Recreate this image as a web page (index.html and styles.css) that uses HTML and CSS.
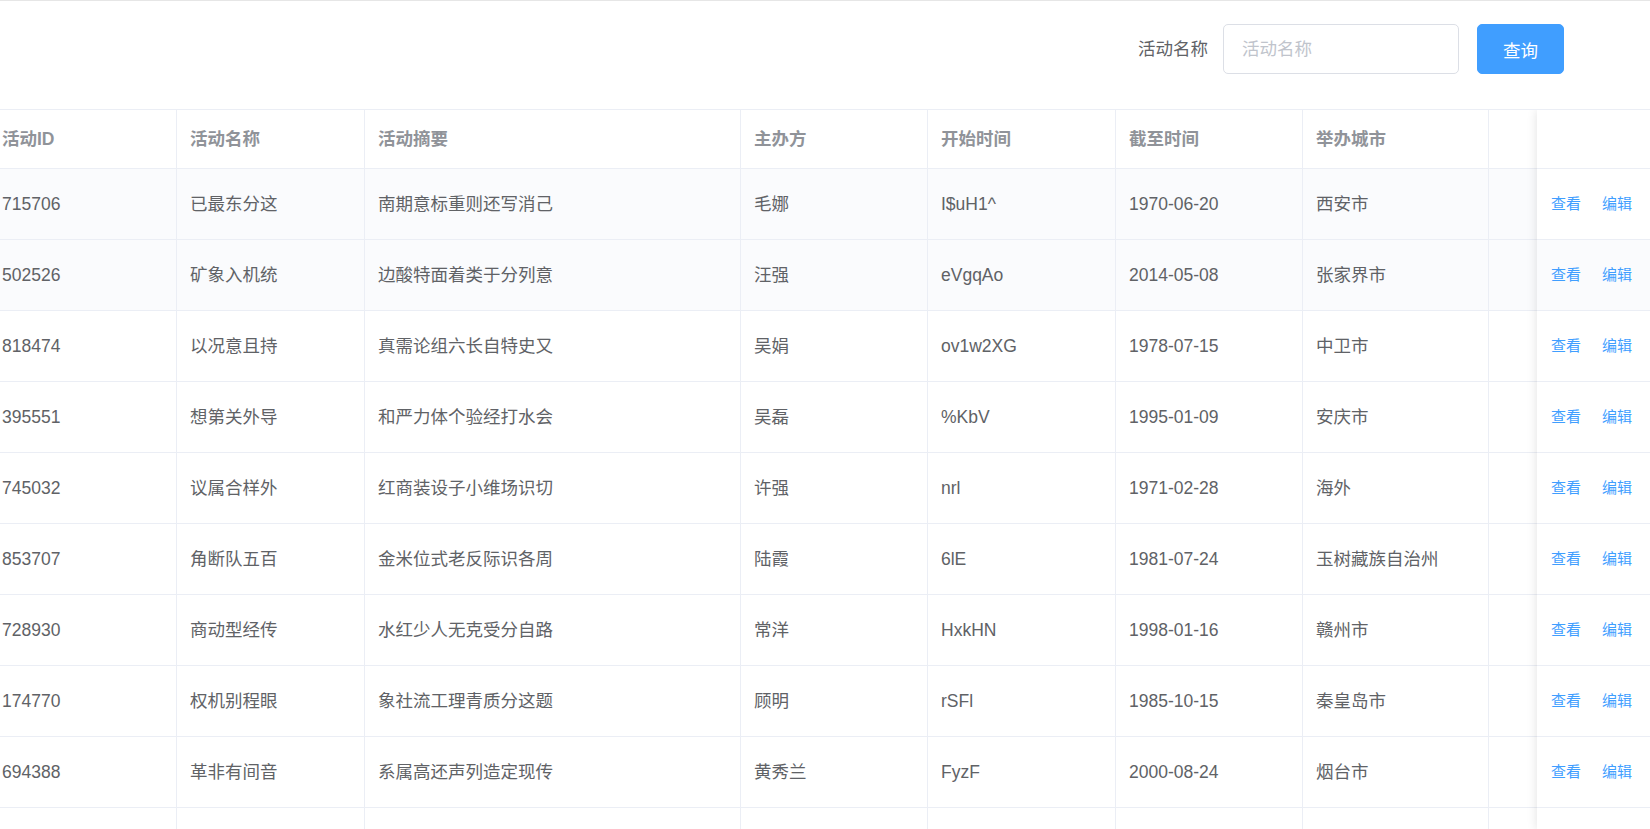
FILE: index.html
```html
<!DOCTYPE html>
<html lang="zh-CN">
<head>
<meta charset="utf-8">
<title>活动列表</title>
<link rel="stylesheet" href="styles.css">
</head>
<body>
<div class="page">
  <form class="search">
    <label class="search-label" for="name">活动名称</label>
    <input class="search-input" id="name" type="text" placeholder="活动名称">
    <button class="btn-primary" type="button">查询</button>
  </form>

  <div class="table">
    <div class="table-scroll">
      <div class="row head">
        <div class="cell">活动ID</div>
        <div class="cell">活动名称</div>
        <div class="cell">活动摘要</div>
        <div class="cell">主办方</div>
        <div class="cell">开始时间</div>
        <div class="cell">截至时间</div>
        <div class="cell">举办城市</div>
        <div class="cell"></div>
      </div>
      <div class="row tint">
        <div class="cell">715706</div><div class="cell">已最东分这</div><div class="cell">南期意标重则还写消己</div><div class="cell">毛娜</div><div class="cell">I$uH1^</div><div class="cell">1970-06-20</div><div class="cell">西安市</div><div class="cell"></div>
      </div>
      <div class="row tint">
        <div class="cell">502526</div><div class="cell">矿象入机统</div><div class="cell">边酸特面着类于分列意</div><div class="cell">汪强</div><div class="cell">eVgqAo</div><div class="cell">2014-05-08</div><div class="cell">张家界市</div><div class="cell"></div>
      </div>
      <div class="row">
        <div class="cell">818474</div><div class="cell">以况意且持</div><div class="cell">真需论组六长自特史又</div><div class="cell">吴娟</div><div class="cell">ov1w2XG</div><div class="cell">1978-07-15</div><div class="cell">中卫市</div><div class="cell"></div>
      </div>
      <div class="row">
        <div class="cell">395551</div><div class="cell">想第关外导</div><div class="cell">和严力体个验经打水会</div><div class="cell">吴磊</div><div class="cell">%KbV</div><div class="cell">1995-01-09</div><div class="cell">安庆市</div><div class="cell"></div>
      </div>
      <div class="row">
        <div class="cell">745032</div><div class="cell">议属合样外</div><div class="cell">红商装设子小维场识切</div><div class="cell">许强</div><div class="cell">nrl</div><div class="cell">1971-02-28</div><div class="cell">海外</div><div class="cell"></div>
      </div>
      <div class="row">
        <div class="cell">853707</div><div class="cell">角断队五百</div><div class="cell">金米位式老反际识各周</div><div class="cell">陆霞</div><div class="cell">6lE</div><div class="cell">1981-07-24</div><div class="cell">玉树藏族自治州</div><div class="cell"></div>
      </div>
      <div class="row">
        <div class="cell">728930</div><div class="cell">商动型经传</div><div class="cell">水红少人无克受分自路</div><div class="cell">常洋</div><div class="cell">HxkHN</div><div class="cell">1998-01-16</div><div class="cell">赣州市</div><div class="cell"></div>
      </div>
      <div class="row">
        <div class="cell">174770</div><div class="cell">权机别程眼</div><div class="cell">象社流工理青质分这题</div><div class="cell">顾明</div><div class="cell">rSFl</div><div class="cell">1985-10-15</div><div class="cell">秦皇岛市</div><div class="cell"></div>
      </div>
      <div class="row">
        <div class="cell">694388</div><div class="cell">革非有间音</div><div class="cell">系属高还声列造定现传</div><div class="cell">黄秀兰</div><div class="cell">FyzF</div><div class="cell">2000-08-24</div><div class="cell">烟台市</div><div class="cell"></div>
      </div>
      <div class="row">
        <div class="cell"></div><div class="cell"></div><div class="cell"></div><div class="cell"></div><div class="cell"></div><div class="cell"></div><div class="cell"></div><div class="cell"></div>
      </div>
    </div>

    <div class="fixed-right">
      <div class="op head-op"></div>
      <div class="op"><a class="link">查看</a><a class="link">编辑</a></div>
      <div class="op tint"><a class="link">查看</a><a class="link">编辑</a></div>
      <div class="op"><a class="link">查看</a><a class="link">编辑</a></div>
      <div class="op"><a class="link">查看</a><a class="link">编辑</a></div>
      <div class="op"><a class="link">查看</a><a class="link">编辑</a></div>
      <div class="op"><a class="link">查看</a><a class="link">编辑</a></div>
      <div class="op"><a class="link">查看</a><a class="link">编辑</a></div>
      <div class="op"><a class="link">查看</a><a class="link">编辑</a></div>
      <div class="op"><a class="link">查看</a><a class="link">编辑</a></div>
      <div class="op"></div>
    </div>
  </div>
</div>
</body>
</html>
```

FILE: styles.css
```css
html, body {
  margin: 0;
  padding: 0;
  background: #ffffff;
  overflow: hidden;
}

.page {
  width: 1650px;
  height: 829px;
  overflow: hidden;
  font-family: "Liberation Sans", "Noto Sans CJK SC", sans-serif;
  font-size: 17.5px;
  color: #606266;
}

/* search bar */
.search {
  box-sizing: border-box;
  height: 109px;
  margin: 0;
  border-top: 1px solid #e6e6e6;
  padding: 23px 86px 0 0;
  display: flex;
  justify-content: flex-end;
  align-items: flex-start;
}

.search-label {
  height: 50px;
  line-height: 50px;
  padding-right: 15px;
  color: #606266;
  font-size: 17.5px;
}

.search-input {
  box-sizing: border-box;
  width: 236px;
  height: 50px;
  margin: 0 18px 0 0;
  padding: 0 18px;
  border: 1px solid #dcdfe6;
  border-radius: 5px;
  outline: none;
  font-family: inherit;
  font-size: 17.5px;
  color: #606266;
  background: #fff;
}

.search-input::placeholder {
  color: #c0c4cc;
}

.btn-primary {
  box-sizing: border-box;
  width: 87px;
  height: 50px;
  padding: 0;
  border: 1px solid #409eff;
  border-radius: 5px;
  background: #409eff;
  color: #ffffff;
  font-family: inherit;
  font-size: 17.5px;
}

/* table */
.table {
  position: relative;
  height: 720px;
  border-top: 1px solid #ebeef5;
  overflow: hidden;
}

.table-scroll {
  margin-left: -11px;
}

.row {
  display: grid;
  grid-template-columns: 188px 188px 376px 187px 188px 187px 186px 200px;
}

.cell {
  box-sizing: border-box;
  height: 71px;
  padding-left: 13px;
  border-right: 1px solid #ebeef5;
  border-bottom: 1px solid #ebeef5;
  display: flex;
  align-items: center;
  line-height: 1.3;
  white-space: nowrap;
  overflow: hidden;
}

.head .cell {
  height: 59px;
  font-weight: bold;
  color: #909399;
}

.row.tint .cell {
  background: #fafbfd;
}

/* fixed operation column */
.fixed-right {
  position: absolute;
  top: 0;
  right: 0;
  bottom: 0;
  width: 113px;
  background: #ffffff;
  box-shadow: 0 0 10px rgba(0, 0, 0, 0.12);
}

.op {
  box-sizing: border-box;
  height: 71px;
  padding-left: 14px;
  border-bottom: 1px solid #ebeef5;
  display: flex;
  align-items: center;
  gap: 21px;
  background: #ffffff;
}

.op.tint {
  background: #fafbfd;
}

.head-op {
  height: 59px;
}

.link {
  color: #409eff;
  font-size: 15px;
  line-height: 1.3;
  cursor: pointer;
}
```
